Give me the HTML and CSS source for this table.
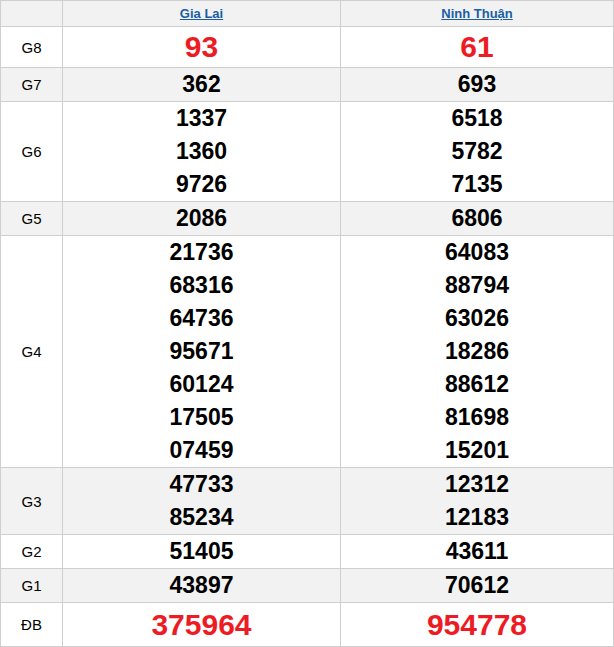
FILE: index.html
```html
<!DOCTYPE html>
<html lang="vi">
<head>
<meta charset="utf-8">
<link rel="stylesheet" href="styles.css">
</head>
<body>
<table class="kq">
  <colgroup><col class="c-label"><col class="c-prov1"><col class="c-prov2"></colgroup>
  <thead>
    <tr class="head">
      <th></th>
      <th><a href="#">Gia Lai</a></th>
      <th><a href="#">Ninh Thuận</a></th>
    </tr>
  </thead>
  <tbody>
    <tr class="g8"><td class="lbl">G8</td><td><div class="n big red">93</div></td><td><div class="n big red">61</div></td></tr>
    <tr class="alt"><td class="lbl">G7</td><td><div class="n">362</div></td><td><div class="n">693</div></td></tr>
    <tr><td class="lbl">G6</td><td><div class="n">1337</div><div class="n">1360</div><div class="n">9726</div></td><td><div class="n">6518</div><div class="n">5782</div><div class="n">7135</div></td></tr>
    <tr class="alt"><td class="lbl">G5</td><td><div class="n">2086</div></td><td><div class="n">6806</div></td></tr>
    <tr><td class="lbl">G4</td>
      <td><div class="n">21736</div><div class="n">68316</div><div class="n">64736</div><div class="n">95671</div><div class="n">60124</div><div class="n">17505</div><div class="n">07459</div></td>
      <td><div class="n">64083</div><div class="n">88794</div><div class="n">63026</div><div class="n">18286</div><div class="n">88612</div><div class="n">81698</div><div class="n">15201</div></td></tr>
    <tr class="alt"><td class="lbl">G3</td><td><div class="n">47733</div><div class="n">85234</div></td><td><div class="n">12312</div><div class="n">12183</div></td></tr>
    <tr><td class="lbl">G2</td><td><div class="n">51405</div></td><td><div class="n">43611</div></td></tr>
    <tr class="alt"><td class="lbl">G1</td><td><div class="n">43897</div></td><td><div class="n">70612</div></td></tr>
    <tr class="db"><td class="lbl">ĐB</td><td><div class="n big red">375964</div></td><td><div class="n big red">954778</div></td></tr>
  </tbody>
</table>
</body>
</html>
```
FILE: styles.css
```css
html, body {
  margin: 0;
  padding: 0;
  background: #fff;
}
body {
  font-family: "Liberation Sans", Arial, sans-serif;
  color: #000;
}
.kq {
  width: 614px;
  border-collapse: collapse;
  table-layout: fixed;
}
.c-label { width: 62px; }
.c-prov1 { width: 278px; }
.kq th, .kq td {
  border: 1px solid #cfcfcf;
  padding: 0;
  text-align: center;
  vertical-align: middle;
}
.head th {
  background: #f2f2f2;
  height: 25px;
  font-size: 13px;
  font-weight: bold;
}
.head a {
  color: #1b5ea6;
  text-decoration: underline;
}
.alt td { background: #f2f2f2; }
.lbl {
  font-size: 15px;
}
.n {
  font-size: 23px;
  font-weight: bold;
  line-height: 33px;
}
.g8 .n { line-height: 40px; }
.db .n { line-height: 43px; }
.big { font-size: 30px; }
.red { color: #ed1c24; }
```
